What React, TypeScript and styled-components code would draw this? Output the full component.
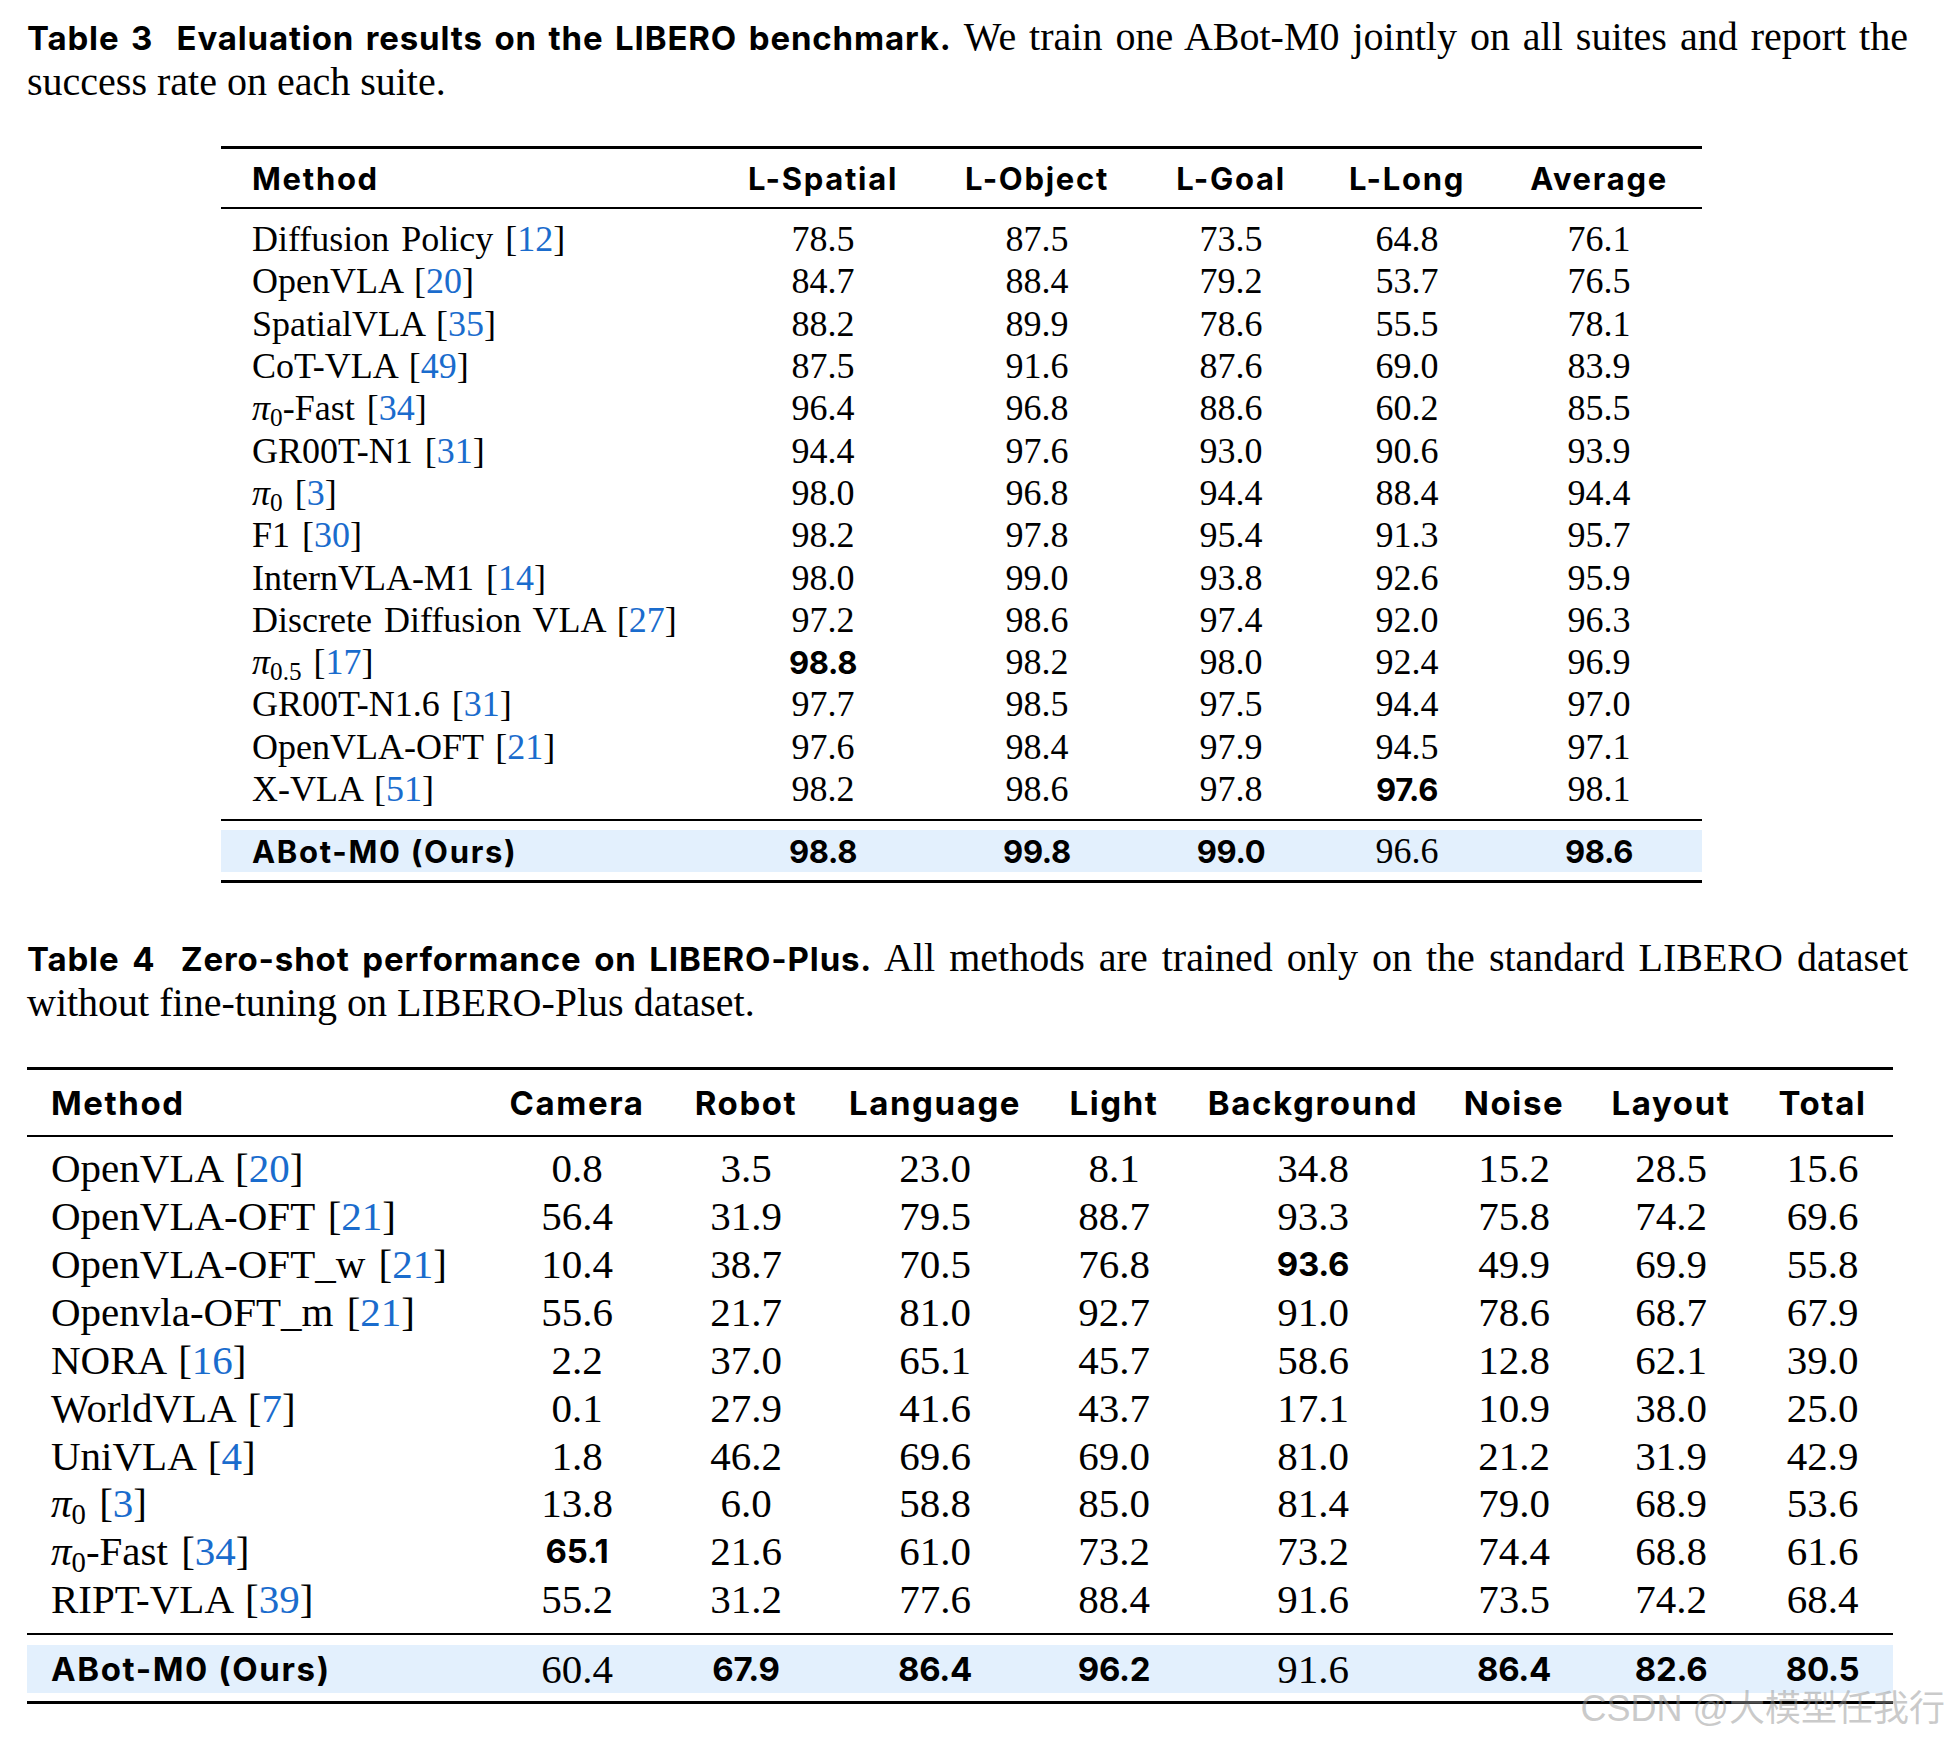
import React from 'react';
import styled, { createGlobalStyle } from 'styled-components';

const SERIF = `'Liberation Serif', 'Times New Roman', serif`;
const SANS = `'Inter', 'Liberation Sans', sans-serif`;
const LINK = '#1a6ccd';

const GlobalStyle = createGlobalStyle`
  html, body {
    margin: 0;
    padding: 0;
    background: #ffffff;
  }
  body {
    width: 1949px;
    height: 1740px;
    overflow: hidden;
  }
`;

type Cell = string;
type Row = { method: React.ReactNode; values: Cell[] };

const Pi = ({ sub }: { sub: string }) => (
  <>
    <PiGlyph>π</PiGlyph>
    <Sub>{sub}</Sub>
  </>
);

const Ref = ({ n }: { n: string }) => (
  <>
    {' '}[<RefNum>{n}</RefNum>]
  </>
);

const table3: Row[] = [
  { method: <>Diffusion Policy<Ref n="12" /></>, values: ['78.5', '87.5', '73.5', '64.8', '76.1'] },
  { method: <>OpenVLA<Ref n="20" /></>, values: ['84.7', '88.4', '79.2', '53.7', '76.5'] },
  { method: <>SpatialVLA<Ref n="35" /></>, values: ['88.2', '89.9', '78.6', '55.5', '78.1'] },
  { method: <>CoT-VLA<Ref n="49" /></>, values: ['87.5', '91.6', '87.6', '69.0', '83.9'] },
  { method: <><Pi sub="0" />-Fast<Ref n="34" /></>, values: ['96.4', '96.8', '88.6', '60.2', '85.5'] },
  { method: <>GR00T-N1<Ref n="31" /></>, values: ['94.4', '97.6', '93.0', '90.6', '93.9'] },
  { method: <><Pi sub="0" /><Ref n="3" /></>, values: ['98.0', '96.8', '94.4', '88.4', '94.4'] },
  { method: <>F1<Ref n="30" /></>, values: ['98.2', '97.8', '95.4', '91.3', '95.7'] },
  { method: <>InternVLA-M1<Ref n="14" /></>, values: ['98.0', '99.0', '93.8', '92.6', '95.9'] },
  { method: <>Discrete Diffusion VLA<Ref n="27" /></>, values: ['97.2', '98.6', '97.4', '92.0', '96.3'] },
  { method: <><Pi sub="0.5" /><Ref n="17" /></>, values: ['*98.8', '98.2', '98.0', '92.4', '96.9'] },
  { method: <>GR00T-N1.6<Ref n="31" /></>, values: ['97.7', '98.5', '97.5', '94.4', '97.0'] },
  { method: <>OpenVLA-OFT<Ref n="21" /></>, values: ['97.6', '98.4', '97.9', '94.5', '97.1'] },
  { method: <>X-VLA<Ref n="51" /></>, values: ['98.2', '98.6', '97.8', '*97.6', '98.1'] },
];
const ours3 = ['*98.8', '*99.8', '*99.0', '96.6', '*98.6'];

const table4: Row[] = [
  { method: <>OpenVLA<Ref n="20" /></>, values: ['0.8', '3.5', '23.0', '8.1', '34.8', '15.2', '28.5', '15.6'] },
  { method: <>OpenVLA-OFT<Ref n="21" /></>, values: ['56.4', '31.9', '79.5', '88.7', '93.3', '75.8', '74.2', '69.6'] },
  { method: <>OpenVLA-OFT_w<Ref n="21" /></>, values: ['10.4', '38.7', '70.5', '76.8', '*93.6', '49.9', '69.9', '55.8'] },
  { method: <>Openvla-OFT_m<Ref n="21" /></>, values: ['55.6', '21.7', '81.0', '92.7', '91.0', '78.6', '68.7', '67.9'] },
  { method: <>NORA<Ref n="16" /></>, values: ['2.2', '37.0', '65.1', '45.7', '58.6', '12.8', '62.1', '39.0'] },
  { method: <>WorldVLA<Ref n="7" /></>, values: ['0.1', '27.9', '41.6', '43.7', '17.1', '10.9', '38.0', '25.0'] },
  { method: <>UniVLA<Ref n="4" /></>, values: ['1.8', '46.2', '69.6', '69.0', '81.0', '21.2', '31.9', '42.9'] },
  { method: <><Pi sub="0" /><Ref n="3" /></>, values: ['13.8', '6.0', '58.8', '85.0', '81.4', '79.0', '68.9', '53.6'] },
  { method: <><Pi sub="0" />-Fast<Ref n="34" /></>, values: ['*65.1', '21.6', '61.0', '73.2', '73.2', '74.4', '68.8', '61.6'] },
  { method: <>RIPT-VLA<Ref n="39" /></>, values: ['55.2', '31.2', '77.6', '88.4', '91.6', '73.5', '74.2', '68.4'] },
];
const ours4 = ['60.4', '*67.9', '*86.4', '*96.2', '91.6', '*86.4', '*82.6', '*80.5'];

type Spec = {
  left: number;
  width: number;
  cols: string;
  pad: number;
  size: number;
  boldSize: number;
  track: number;
  headerH: number;
  rowH: number;
  bodyPad: [number, number];
  oursH: number;
  oursPad: [number, number];
  headers: string[];
  rows: Row[];
  ours: Cell[];
};

const spec3: Spec = {
  left: 221,
  width: 1481,
  cols: '495px 214px 214px 174px 178px 206px',
  pad: 31,
  size: 36,
  boldSize: 31,
  track: 1.7,
  headerH: 58,
  rowH: 42.3,
  bodyPad: [9, 9],
  oursH: 59,
  oursPad: [9, 8],
  headers: ['Method', 'L-Spatial', 'L-Object', 'L-Goal', 'L-Long', 'Average'],
  rows: table3,
  ours: ours3,
};

const spec4: Spec = {
  left: 27,
  width: 1866,
  cols: '465px 170px 168px 210px 148px 250px 152px 162px 141px',
  pad: 24,
  size: 41,
  boldSize: 33,
  track: 1.6,
  headerH: 65,
  rowH: 47.9,
  bodyPad: [7, 10],
  oursH: 66,
  oursPad: [10, 8],
  headers: ['Method', 'Camera', 'Robot', 'Language', 'Light', 'Background', 'Noise', 'Layout', 'Total'],
  rows: table4,
  ours: ours4,
};

const Value = ({ v, size, boldSize }: { v: Cell; size: number; boldSize: number }) =>
  v.startsWith('*') ? <Bold $size={boldSize}>{v.slice(1)}</Bold> : <Num $size={size}>{v}</Num>;

const ResultTable = ({ s }: { s: Spec }) => (
  <TableBox $left={s.left} $width={s.width}>
    <Rule $thick />
    <HeaderRow $cols={s.cols} $h={s.headerH}>
      {s.headers.map((h, i) => (
        <HeadCell key={h} $first={i === 0} $pad={s.pad} $size={s.boldSize} $track={s.track}>
          {h}
        </HeadCell>
      ))}
    </HeaderRow>
    <Rule />
    <Body $pad={s.bodyPad}>
      {s.rows.map((r, i) => (
        <DataRow key={i} $cols={s.cols} $h={s.rowH}>
          <MethodCell $pad={s.pad} $size={s.size}>{r.method}</MethodCell>
          {r.values.map((v, j) => (
            <NumCell key={j}>
              <Value v={v} size={s.size} boldSize={s.boldSize} />
            </NumCell>
          ))}
        </DataRow>
      ))}
    </Body>
    <Rule />
    <OursBand $h={s.oursH} $pad={s.oursPad}>
      <OursRow $cols={s.cols}>
        <OursLabel $pad={s.pad} $size={s.boldSize} $track={s.track}>
          ABot-M0 (Ours)
        </OursLabel>
        {s.ours.map((v, j) => (
          <NumCell key={j}>
            <Value v={v} size={s.size} boldSize={s.boldSize} />
          </NumCell>
        ))}
      </OursRow>
    </OursBand>
    <Rule $thick />
  </TableBox>
);

const App = () => (
  <>
    <GlobalStyle />
    <Page>
      <Caption>
        <CaptionLine $justify>
          <CapTitle>Table 3&nbsp;&nbsp;Evaluation results on the LIBERO benchmark.</CapTitle> We train one
          ABot-M0 jointly on all suites and report the
        </CaptionLine>
        <CaptionLine>success rate on each suite.</CaptionLine>
      </Caption>
      <ResultTable s={spec3} />

      <Caption $top={52}>
        <CaptionLine $justify>
          <CapTitle>Table 4&nbsp;&nbsp;Zero-shot performance on LIBERO-Plus.</CapTitle> All methods are
          trained only on the standard LIBERO dataset
        </CaptionLine>
        <CaptionLine>without fine-tuning on LIBERO-Plus dataset.</CaptionLine>
      </Caption>
      <ResultTable s={spec4} />

      <Watermark>CSDN @大模型任我行</Watermark>
    </Page>
  </>
);

const Page = styled.main`
  position: relative;
  width: 1949px;
  height: 1740px;
  box-sizing: border-box;
  padding: 14px 41px 0 27px;
  background: #fff;
  color: #000;
  font-family: ${SERIF};
`;

const Caption = styled.div<{ $top?: number }>`
  margin-top: ${({ $top }) => $top ?? 0}px;
  font-family: ${SERIF};
  font-size: 40px;
  line-height: 45px;
`;

const CaptionLine = styled.div<{ $justify?: boolean }>`
  height: 45px;
  white-space: nowrap;
  text-align: ${({ $justify }) => ($justify ? 'justify' : 'left')};
  text-align-last: ${({ $justify }) => ($justify ? 'justify' : 'left')};
`;

const CapTitle = styled.span`
  font-family: ${SANS};
  font-weight: 700;
  font-size: 33px;
  letter-spacing: 0.85px;
`;

const TableBox = styled.section<{ $left: number; $width: number }>`
  margin: 42px 0 0 ${({ $left }) => $left - 27}px;
  width: ${({ $width }) => $width}px;
`;

const Rule = styled.div<{ $thick?: boolean }>`
  height: ${({ $thick }) => ($thick ? 3 : 2)}px;
  background: #000;
`;

const HeaderRow = styled.div<{ $cols: string; $h: number }>`
  display: grid;
  grid-template-columns: ${({ $cols }) => $cols};
  height: ${({ $h }) => $h}px;
  align-items: center;
`;

const HeadCell = styled.div<{ $first: boolean; $pad: number; $size: number; $track: number }>`
  font-family: ${SANS};
  font-weight: 700;
  font-size: ${({ $size }) => $size}px;
  letter-spacing: ${({ $track }) => $track}px;
  text-align: ${({ $first }) => ($first ? 'left' : 'center')};
  padding-left: ${({ $first, $pad }) => ($first ? $pad : 0)}px;
  white-space: nowrap;
`;

const Body = styled.div<{ $pad: [number, number] }>`
  padding: ${({ $pad }) => `${$pad[0]}px 0 ${$pad[1]}px`};
`;

const DataRow = styled.div<{ $cols: string; $h: number }>`
  display: grid;
  grid-template-columns: ${({ $cols }) => $cols};
  height: ${({ $h }) => $h}px;
  align-items: center;
`;

const MethodCell = styled.div<{ $pad: number; $size: number }>`
  padding-left: ${({ $pad }) => $pad}px;
  font-family: ${SERIF};
  font-size: ${({ $size }) => $size}px;
  word-spacing: 3px;
  white-space: nowrap;
`;

const NumCell = styled.div`
  text-align: center;
  white-space: nowrap;
`;

const Num = styled.span<{ $size: number }>`
  font-family: ${SERIF};
  font-size: ${({ $size }) => $size}px;
`;

const Bold = styled.span<{ $size: number }>`
  font-family: ${SANS};
  font-weight: 700;
  font-size: ${({ $size }) => $size}px;
  letter-spacing: -0.3px;
`;

const RefNum = styled.span`
  color: ${LINK};
`;

const PiGlyph = styled.i`
  font-style: italic;
`;

const Sub = styled.sub`
  font-size: 0.7em;
  vertical-align: -0.25em;
  line-height: 0;
`;

const OursBand = styled.div<{ $h: number; $pad: [number, number] }>`
  height: ${({ $h }) => $h}px;
  box-sizing: border-box;
  padding: ${({ $pad }) => `${$pad[0]}px 0 ${$pad[1]}px`};
`;

const OursRow = styled.div<{ $cols: string }>`
  display: grid;
  grid-template-columns: ${({ $cols }) => $cols};
  height: 100%;
  align-items: center;
  background: #e3f0fd;
`;

const OursLabel = styled.div<{ $pad: number; $size: number; $track: number }>`
  padding-left: ${({ $pad }) => $pad}px;
  font-family: ${SANS};
  font-weight: 700;
  font-size: ${({ $size }) => $size}px;
  letter-spacing: ${({ $track }) => $track}px;
  white-space: nowrap;
`;

const Watermark = styled.div`
  position: absolute;
  right: 4px;
  bottom: 13px;
  font-family: 'Liberation Sans', 'Noto Sans CJK SC', sans-serif;
  font-size: 36px;
  line-height: 1;
  color: rgba(150, 150, 150, 0.5);
  white-space: nowrap;
`;

export default App;
